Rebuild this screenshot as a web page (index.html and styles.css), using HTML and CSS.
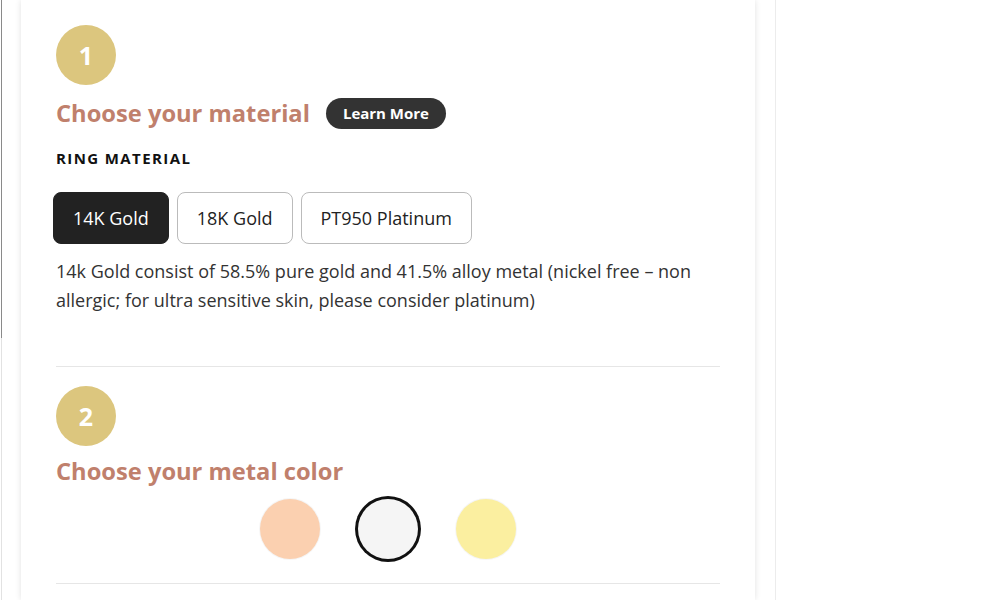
FILE: index.html
```html
<!DOCTYPE html>
<html lang="en">
<head>
<meta charset="UTF-8">
<meta name="viewport" content="width=device-width, initial-scale=1.0">
<title>Ring Builder</title>
<link rel="stylesheet" href="styles.css">
</head>
<body>
<div class="page">
  <div class="card">

    <!-- Step 1: material -->
    <section class="step">
      <div class="step-number">1</div>
      <div class="step-title">
        <h2>Choose your material</h2>
        <button class="learn-more" type="button">Learn More</button>
      </div>
      <h3 class="option-label">Ring Material</h3>
      <div class="options">
        <button class="option active" type="button">14K Gold</button>
        <button class="option" type="button">18K Gold</button>
        <button class="option" type="button">PT950 Platinum</button>
      </div>
      <p class="description">14k Gold consist of 58.5% pure gold and 41.5% alloy metal (nickel free – non allergic; for ultra sensitive skin, please consider platinum)</p>
    </section>

    <!-- Step 2: metal color -->
    <section class="step step-color">
      <div class="step-number">2</div>
      <div class="step-title">
        <h2>Choose your metal color</h2>
      </div>
      <div class="swatches">
        <span class="swatch rose" title="Rose Gold"></span>
        <span class="swatch white selected" title="White Gold"></span>
        <span class="swatch yellow" title="Yellow Gold"></span>
      </div>
    </section>

  </div>
</div>
</body>
</html>
```

FILE: styles.css
```css
body {
  margin: 0;
  font-family: "Open Sans", Arial, sans-serif;
  color: #333;
  background-color: #fff;
  background-image: linear-gradient(#8a8a8a, #8a8a8a), linear-gradient(#e2e2e2, #e2e2e2), linear-gradient(#ececec, #ececec);
  background-repeat: no-repeat;
  background-size: 1px 338px, 1px 100%, 1px 100%;
  background-position: 1px 0, 1px 0, 775px 0;
  height: 600px;
  overflow: hidden;
}

.page {
  padding-left: 21px;
}

.card {
  width: 664px;
  height: 575px;
  padding: 25px 35px 0 35px;
  background-color: #fff;
  box-shadow: 0 0 6px rgba(0, 0, 0, 0.12);
  overflow: hidden;
}

.step {
  padding-bottom: 51px;
  border-bottom: 1px solid #e6e6e6;
}

.step-color {
  padding-top: 19px;
  padding-bottom: 24px;
}

.step-number {
  width: 60px;
  height: 60px;
  border-radius: 50%;
  background-color: #dcc67e;
  color: #fff;
  font-size: 25px;
  font-weight: 700;
  line-height: 60px;
  text-align: center;
}

.step-title {
  display: flex;
  align-items: center;
  gap: 16px;
  margin-top: 12px;
}

.step-color .step-title {
  margin-top: 9px;
}

h2 {
  margin: 0;
  font-size: 23.7px;
  font-weight: 700;
  color: #c0806c;
  line-height: 32px;
}

.learn-more {
  padding: 0 17px;
  height: 31px;
  border: none;
  border-radius: 16px;
  background-color: #333;
  color: #fff;
  font-family: inherit;
  font-size: 15px;
  font-weight: 700;
  cursor: pointer;
}

.option-label {
  margin: 19px 0 0 0;
  font-size: 15px;
  font-weight: 700;
  letter-spacing: 1.4px;
  text-transform: uppercase;
  color: #111;
}

.options {
  display: flex;
  gap: 8px;
  margin: 24px 0 0 -3px;
}

.option {
  height: 52px;
  padding: 0 19px;
  border: 1px solid #bbb;
  border-radius: 8px;
  background-color: #fff;
  color: #222;
  font-family: inherit;
  font-size: 18px;
  cursor: pointer;
}

.option.active {
  background-color: #222;
  border-color: #222;
  color: #fff;
}

.description {
  margin: 13px 0 0 0;
  font-size: 18px;
  line-height: 29px;
  color: #333;
}

.swatches {
  display: flex;
  justify-content: center;
  gap: 38px;
  margin-top: 12px;
}

.swatch {
  width: 60px;
  height: 60px;
  border-radius: 50%;
  box-shadow: 0 0 0 1px rgba(0, 0, 0, 0.04);
}

.swatch.rose {
  background-color: #fbd0b0;
}

.swatch.white {
  background-color: #f5f5f5;
}

.swatch.yellow {
  background-color: #fbefa0;
}

.swatch.selected {
  box-shadow: 0 0 0 3px #111;
}
```
